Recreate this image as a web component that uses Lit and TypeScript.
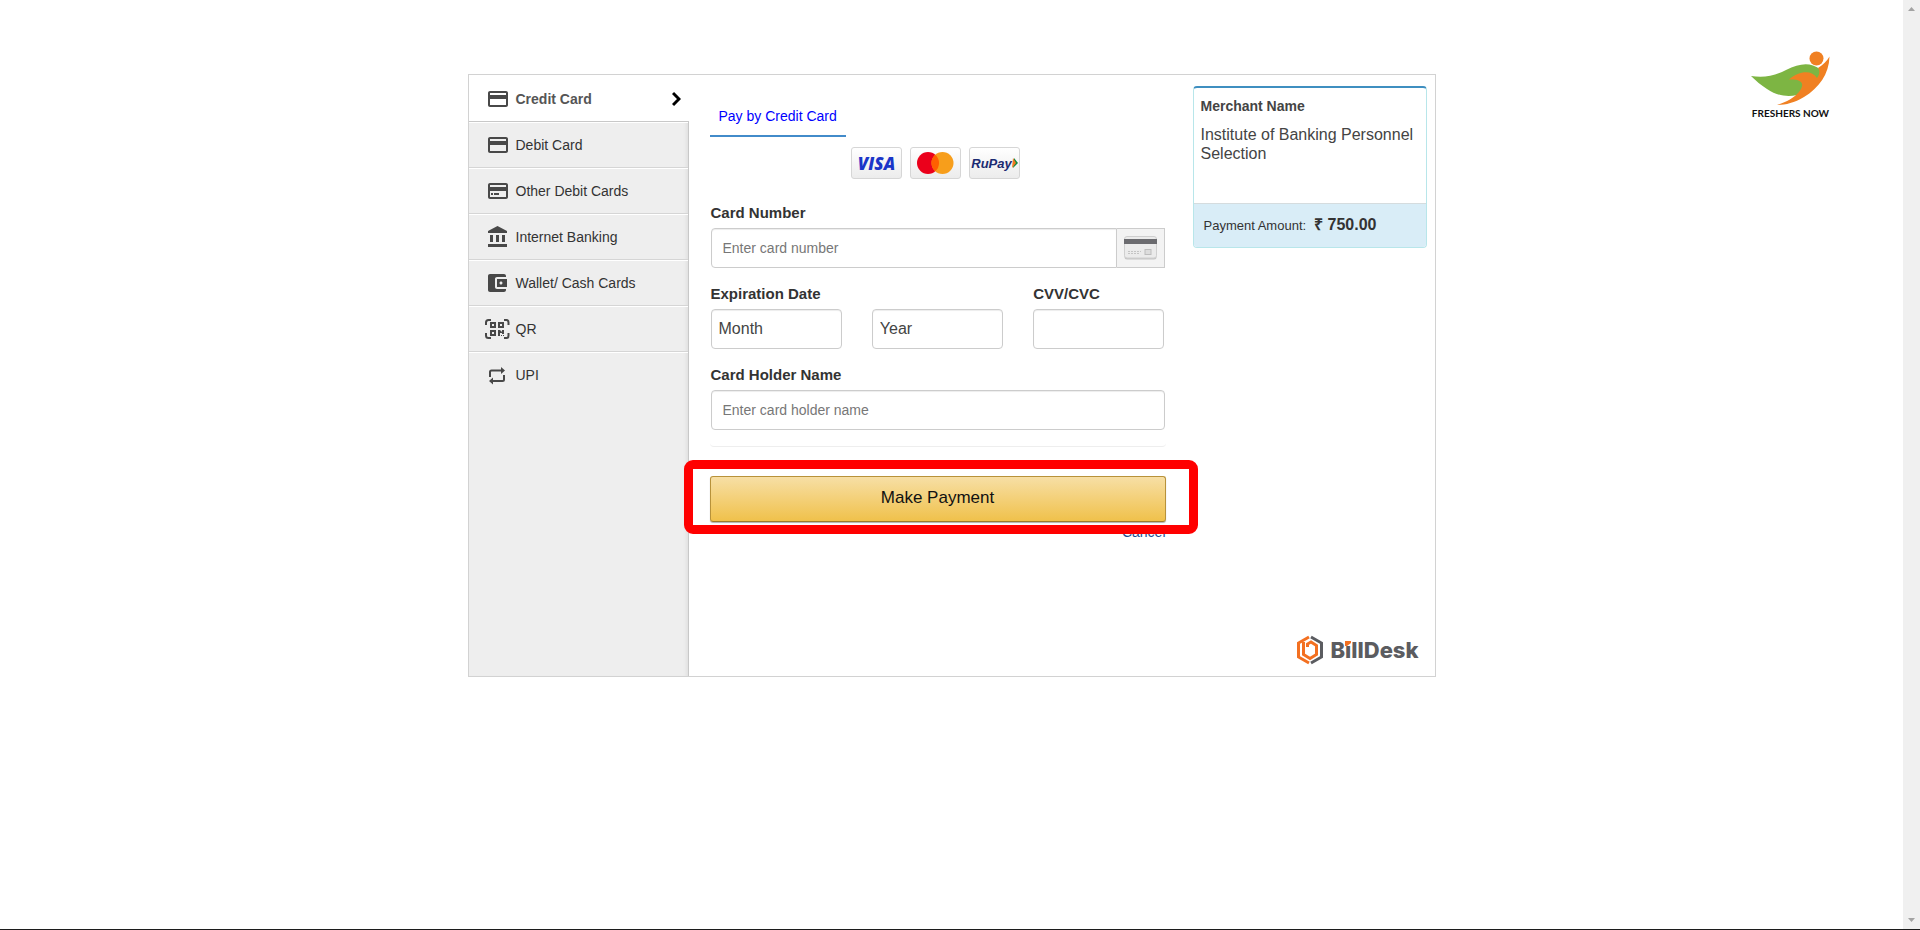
import { LitElement, html, css, svg, TemplateResult } from "lit";
import { customElement, state } from "lit/decorators.js";

interface Method {
  id: string;
  label: string;
  icon: TemplateResult;
}

const cardShape = svg`<path d="M20 4H4c-1.110 0-1.990.890-1.990 2L2 18c0 1.110.890 2 2 2h16c1.110 0 2-.890 2-2V6c0-1.110-.890-2-2-2zm0 14H4v-6h16v6zm0-10H4V6h16v2z"/>`;

const METHODS: Method[] = [
  { id: "credit", label: "Credit Card", icon: cardShape },
  { id: "debit", label: "Debit Card", icon: cardShape },
  {
    id: "other",
    label: "Other Debit Cards",
    icon: svg`${cardShape}<path d="M5 14h2v2H5zM8 14h5v2H8z"/>`,
  },
  {
    id: "bank",
    label: "Internet Banking",
    icon: svg`<path d="M4 10v7h3v-7H4zm6 0v7h3v-7h-3zM2 22h19v-3H2v3zm14-12v7h3v-7h-3zM11.500 1L2 6v2h19V6l-9.500-5z"/>`,
  },
  {
    id: "wallet",
    label: "Wallet/ Cash Cards",
    icon: svg`<path d="M20 18v1c0 1.100-.900 2-2 2H4c-1.110 0-2-.900-2-2V5c0-1.100.890-2 2-2h14c1.100 0 2 .900 2 2v1h-9c-1.110 0-2 .900-2 2v8c0 1.100.890 2 2 2h9zm-9-2h10V8H11v8zm4-2.500c-.830 0-1.500-.670-1.500-1.500s.670-1.500 1.500-1.500 1.500.670 1.500 1.500-.670 1.500-1.500 1.500z"/>`,
  },
  {
    id: "qr",
    label: "QR",
    icon: svg`<path d="M5 3H2.500Q0 3 0 5.500V8M18 3h2.500Q22.500 3 22.500 5.500V8M0 16v2.500Q0 21 2.500 21H5M18 21h2.500q2 0 2-2.500V16" fill="none" stroke="currentColor" stroke-width="2"/>
      <path fill-rule="evenodd" d="M4 5h6v6H4zm2 2v2h2V7zM12 5h6v6h-6zm2 2v2h2V7zM4 13h6v6H4zm2 2v2h2v-2zM12 13h2l2 2v-2h2v4h-2v-1h-2v3h-2zM15 18h1v1h-1zM17 18h1v1h-1z"/>`,
  },
  {
    id: "upi",
    label: "UPI",
    icon: svg`<path d="M4 14V9Q4 7.500 5.500 7.500H15M18 12v4.500Q18 18 16.500 18H7" fill="none" stroke="currentColor" stroke-width="2"/><path d="M15 4l4 3.500-4 3.500zM7 14.500L3 18l4 3.500z"/>`,
  },
];

@customElement("payment-methods")
class PaymentMethods extends LitElement {
  @state() private active = "credit";

  static styles = css`
    :host {
      display: block;
      background: #eee;
      border-right: 1px solid #c8c8c8;
      box-shadow: inset -4px 0 4px -3px rgba(0, 0, 0, 0.08);
    }
    .list {
      margin: 0;
      padding: 0;
      list-style: none;
    }
    .link {
      display: flex;
      align-items: center;
      gap: 6px;
      box-sizing: border-box;
      height: 46px;
      padding: 0 8px 0 17px;
      border-top: 1px solid #fff;
      border-bottom: 1px solid #d5d5d5;
      color: #333;
      font-size: 14px;
      line-height: 20px;
      text-decoration: none;
    }
    .item:last-child .link {
      border-bottom-color: transparent;
    }
    .active {
      height: 47px;
      margin-right: -1px;
      background: #fff;
      border-bottom-color: #c8c8c8;
      color: #555;
      font-weight: bold;
    }
    .icon {
      flex: none;
      width: 24px;
      height: 24px;
      fill: currentColor;
      color: #484848;
      overflow: visible;
    }
    .label {
      flex: 1;
    }
    .chevron {
      width: 9px;
      height: 16px;
      fill: none;
      stroke: #000;
      stroke-width: 3;
    }
  `;

  private pick(e: Event, id: string) {
    e.preventDefault();
    this.active = id;
  }

  render() {
    return html`<nav aria-label="Payment methods">
      <ul class="list">
        ${METHODS.map(
          (m) => html`<li class="item">
            <a
              class="link ${m.id === this.active ? "active" : ""}"
              href="#${m.id}"
              @click=${(e: Event) => this.pick(e, m.id)}
            >
              <svg class="icon" viewBox="0 0 24 24" aria-hidden="true">${m.icon}</svg>
              <span class="label">${m.label}</span>
              ${m.id === this.active
                ? html`<svg class="chevron" viewBox="0 0 9 16" aria-hidden="true"><path d="M1 2l6 6-6 6" /></svg>`
                : ""}
            </a>
          </li>`
        )}
      </ul>
    </nav>`;
  }
}

@customElement("card-form")
class CardForm extends LitElement {
  static styles = css`
    :host {
      display: block;
      padding-top: 21px;
      color: #333;
    }
    .tab {
      display: inline-block;
      box-sizing: border-box;
      height: 41px;
      padding: 0 9px;
      border-bottom: 2px solid #428bca;
      color: #00f;
      font-size: 14px;
      line-height: 40px;
      text-decoration: none;
      vertical-align: top;
    }
    .brands {
      display: flex;
      justify-content: center;
      gap: 8px;
      margin: 10px 0 24px;
      padding-right: 4px;
    }
    .brand {
      display: flex;
      align-items: center;
      justify-content: center;
      box-sizing: border-box;
      width: 51px;
      height: 32px;
      border: 1px solid #d6d6d6;
      border-radius: 3px;
      background: linear-gradient(#fff, #ececec);
      font-style: italic;
      font-weight: bold;
    }
    .visa {
      color: #1a35c8;
      font-family: "Open Sans", sans-serif;
      font-size: 17px;
      font-weight: 800;
    }
    .rupay {
      color: #1b2b72;
      font-size: 13px;
    }
    .circles {
      width: 37px;
      height: 22px;
    }
    .arrow {
      flex: none;
      width: 6px;
      height: 10px;
    }
    .fields {
      display: grid;
      gap: 16px;
      padding: 0 1px 16px;
      border-bottom: 1px solid #eee;
      border-radius: 4px;
    }
    .label {
      display: block;
      margin-bottom: 5px;
      font-size: 15px;
      font-weight: bold;
      line-height: 20px;
    }
    .row {
      display: grid;
      grid-template-columns: repeat(3, 1fr);
      column-gap: 30px;
      align-items: end;
    }
    .box {
      display: block;
      box-sizing: border-box;
      width: 100%;
      min-width: 0;
      height: 40px;
      margin: 0;
      padding: 0 11px;
      border: 1px solid #ccc;
      border-radius: 4px;
      background: #fff;
      box-shadow: inset 0 1px 1px rgba(0, 0, 0, 0.075);
      color: #444;
      font-family: inherit;
      font-size: 14px;
    }
    .box::placeholder {
      color: #777;
      opacity: 1;
    }
    .select {
      appearance: none;
      padding: 0 7px 2px;
      font-size: 16px;
    }
    .group {
      display: flex;
    }
    .joined {
      flex: 1;
      border-radius: 4px 0 0 4px;
    }
    .addon {
      display: flex;
      align-items: center;
      justify-content: center;
      box-sizing: border-box;
      width: 48px;
      border: 1px solid #ccc;
      border-left: 0;
      background: #f3f3f3;
    }
    .generic {
      width: 33px;
      height: 24px;
    }
    .submit {
      position: relative;
      margin-top: 29px;
    }
    .pay {
      display: block;
      width: 100%;
      height: 46px;
      padding: 0 0 2px;
      border: 1px solid #b8923a;
      border-bottom-color: #9c7c2c;
      border-radius: 3px;
      background: linear-gradient(#f7dfa5, #f0c14b);
      box-shadow: 0 1px 1px rgba(0, 0, 0, 0.3);
      color: #111;
      font-family: inherit;
      font-size: 17px;
    }
    .highlight {
      position: absolute;
      inset: -16px -32px -12px -26px;
      z-index: 1;
      border: 9px solid #f00;
      border-radius: 9px;
      pointer-events: none;
    }
    .foot {
      text-align: right;
      font-size: 14px;
      line-height: 20px;
    }
    .cancel {
      color: #1d4f91;
      text-decoration: none;
    }
  `;

  render() {
    return html`
      <a class="tab" href="#credit">Pay by Credit Card</a>
      <div class="brands">
        <span class="brand visa">VISA</span>
        <span class="brand">
          <svg class="circles" viewBox="0 0 37 22" role="img" aria-label="Mastercard">
            <circle cx="11" cy="11" r="11" fill="#eb001b" />
            <circle cx="25.500" cy="11" r="11" fill="#f79e1b" />
            <path d="M18.250 2.700a11 11 0 0 1 0 16.600a11 11 0 0 1 0-16.600z" fill="#ff5f00" />
          </svg>
        </span>
        <span class="brand rupay"
          >RuPay<svg class="arrow" viewBox="0 0 6 10" aria-hidden="true">
            <path d="M2 0l4 5-5 5z" fill="#0d8a43" />
            <path d="M1 0l3 5-4 5z" fill="#f47920" /></svg
        ></span>
      </div>
      <form @submit=${(e: Event) => e.preventDefault()}>
        <div class="fields">
          <div>
            <label class="label" for="number">Card Number</label>
            <div class="group">
              <input class="box joined" id="number" type="text" inputmode="numeric" placeholder="Enter card number" />
              <span class="addon">
                <svg class="generic" viewBox="0 0 33 24" aria-hidden="true">
                  <rect x="0.500" y="1.500" width="32" height="22" rx="2.500" fill="#c6c6c6" />
                  <rect x="0.500" y="0.500" width="32" height="21.500" rx="2.500" fill="#ebebeb" stroke="#cfcfcf" />
                  <path d="M0 3h33v5H0z" fill="#6b6b6f" />
                  <path d="M4 15.500h13M4 17.500h11" stroke="#c4c4c4" stroke-dasharray="2 1" />
                  <rect x="21" y="13.500" width="6" height="5" fill="#ddd" stroke="#bdbdbd" />
                </svg>
              </span>
            </div>
          </div>
          <div class="row">
            <div>
              <label class="label" for="month">Expiration Date</label>
              <select class="box select" id="month"><option>Month</option></select>
            </div>
            <select class="box select" aria-label="Expiration year"><option>Year</option></select>
            <div>
              <label class="label" for="cvv">CVV/CVC</label>
              <input class="box" id="cvv" type="password" />
            </div>
          </div>
          <div>
            <label class="label" for="holder">Card Holder Name</label>
            <input class="box" id="holder" type="text" placeholder="Enter card holder name" />
          </div>
        </div>
        <div class="submit">
          <button class="pay" type="submit">Make Payment</button>
          <span class="highlight"></span>
        </div>
        <div class="foot"><a class="cancel" href="#cancel">Cancel</a></div>
      </form>
    `;
  }
}

@customElement("order-summary")
class OrderSummary extends LitElement {
  static styles = css`
    :host {
      display: flex;
      flex-direction: column;
      justify-content: space-between;
      padding: 11px 8px 11px 0;
    }
    .card {
      border: 1px solid #b8e6ea;
      border-top: 2px solid #3f8fc0;
      border-radius: 4px;
      overflow: hidden;
    }
    .merchant {
      min-height: 107px;
      padding: 8px 7px 0;
      color: #444;
    }
    .title {
      margin: 0 0 9px;
      font-size: 14px;
      line-height: 20px;
    }
    .name {
      margin: 0;
      font-size: 16px;
      line-height: 19px;
    }
    .amount {
      display: flex;
      align-items: baseline;
      gap: 8px;
      height: 32px;
      padding: 11px 10px 0;
      border-top: 1px solid #d5dcde;
      background: #d9edf7;
      color: #333;
      font-size: 13px;
      line-height: 20px;
    }
    .value {
      font-size: 16px;
    }
    .billdesk {
      display: flex;
      align-items: center;
      justify-content: flex-end;
      gap: 7px;
      padding-right: 8px;
    }
    .mark {
      width: 26px;
      height: 30px;
    }
    .word {
      position: relative;
      color: #5b5c60;
      font: 800 22px/30px Inter, sans-serif;
    }
    .dot {
      position: absolute;
      top: 6px;
      left: 15px;
      width: 7px;
      height: 5px;
      background: #fff;
    }
  `;

  render() {
    return html`
      <section class="card">
        <div class="merchant">
          <h2 class="title">Merchant Name</h2>
          <p class="name">Institute of Banking Personnel Selection</p>
        </div>
        <div class="amount">Payment Amount: <strong class="value">₹ 750.00</strong></div>
      </section>
      <div class="billdesk">
        <svg class="mark" viewBox="0 0 26 30" fill="none" aria-hidden="true">
          <path d="M12 2L1.500 8v14L12 28" stroke="#f37021" stroke-width="3" />
          <path d="M14 2l10.500 6v14L14 28" stroke="#5b5c60" stroke-width="3" />
          <path d="M6.500 7v12.500l6.500 4 6.500-4v-9L14 7l-3.500 2v3" stroke="#f37021" stroke-width="3" />
        </svg>
        <span class="word"
          >BillDesk<svg class="dot" viewBox="0 0 7 5" aria-hidden="true"><path d="M0 0h6v2L2 5H0z" fill="#f37021" /></svg
        ></span>
      </div>
    `;
  }
}

@customElement("app-root")
class AppRoot extends LitElement {
  static styles = css`
    :host {
      display: grid;
      grid-template: 1fr 1px / 1fr 17px;
      height: 100vh;
      background: #fff;
      font-family: "Liberation Sans", Arial, sans-serif;
    }
    .page {
      display: grid;
      grid-template-columns: 1fr minmax(0, 968px) 1fr;
      align-items: start;
    }
    .panel {
      display: grid;
      grid-column: 2;
      grid-template-columns: 220px 1fr 242px;
      box-sizing: border-box;
      min-height: 603px;
      margin-top: 74px;
      border: 1px solid #d2d2d2;
    }
    .form {
      margin: 0 27px 0 21px;
    }
    .site {
      justify-self: end;
      margin: 50px 72px 0 0;
      width: 81px;
      color: #111;
      text-align: center;
      text-decoration: none;
      font: 700 10px/12px Lato, sans-serif;
      white-space: nowrap;
    }
    .hero {
      display: block;
      width: 81px;
      height: 56px;
      margin-bottom: 1px;
    }
    .scroll {
      display: flex;
      flex-direction: column;
      align-items: center;
      justify-content: space-between;
      padding: 7px 0;
      background: #f0f0f0;
    }
    .tip {
      width: 7px;
      height: 4px;
      fill: #a3a3a3;
    }
    .base {
      grid-column: 1 / -1;
      background: #1c1c1c;
    }
  `;

  render() {
    return html`
      <main class="page">
        <div class="panel">
          <payment-methods></payment-methods>
          <card-form class="form"></card-form>
          <order-summary></order-summary>
        </div>
        <a class="site" href="#home">
          <svg class="hero" viewBox="0 0 81 56" aria-hidden="true">
            <path d="M1 26C14 28 24 26 36 20C50 13 60 12 70 19L70 27L61 34L47 45C38 47 27 46 17 39C11 35 6 31 1 26z" fill="#7db543" />
            <path d="M27 55C36 52 44 48 49 42C55 34 53 29 39 29.500C50 20 62 20 67 28C70 24 70 20 68 18C73 15 77 11 79.500 6.500C79 24 69 38 54 47C44 53 35 55 27 55z" fill="#f08022" />
            <circle cx="66.500" cy="8.500" r="7" fill="#f08022" />
          </svg>
          FRESHERS NOW
        </a>
      </main>
      <div class="scroll" aria-hidden="true">
        <svg class="tip" viewBox="0 0 7 4"><path d="M3.500 0L7 4H0z" /></svg>
        <svg class="tip" viewBox="0 0 7 4"><path d="M0 0h7L3.500 4z" /></svg>
      </div>
      <div class="base"></div>
    `;
  }
}
